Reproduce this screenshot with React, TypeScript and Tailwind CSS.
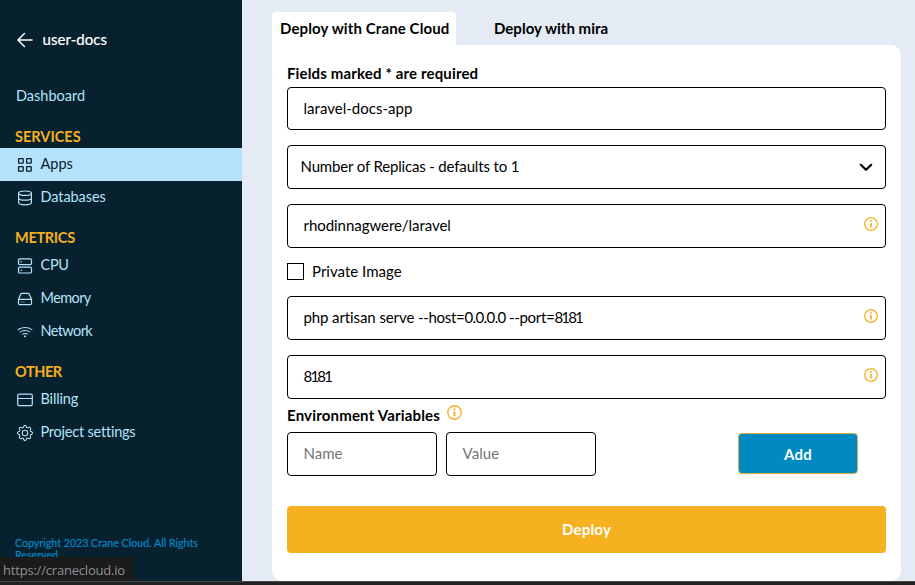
import type { ReactNode } from 'react';
import { BsGear, BsWifi } from 'react-icons/bs';

function Line({ children, size = 16 }: { children: ReactNode; size?: number }) {
  return (
    <svg width={size} height={size} viewBox="0 0 16 16" fill="none" stroke="currentColor" strokeLinecap="round" strokeLinejoin="round" className="shrink-0">
      {children}
    </svg>
  );
}

const AppsIcon = () => (
  <Line>
    <g strokeWidth="1.3">
      <rect x="1.6" y="1.6" width="4.6" height="4.6" rx="0.4" />
      <rect x="9.6" y="1.6" width="4.6" height="4.6" rx="0.4" />
      <rect x="1.6" y="9.6" width="4.6" height="4.6" rx="0.4" />
      <rect x="9.6" y="9.6" width="4.6" height="4.6" rx="0.4" />
    </g>
  </Line>
);

const DatabaseIcon = () => (
  <Line>
    <g strokeWidth="1.2">
      <ellipse cx="8" cy="3.2" rx="6.4" ry="2.2" />
      <path d="M1.6 3.2v9.4c0 1.2 2.9 2.2 6.4 2.2s6.4-1 6.4-2.2V3.2M1.6 7.9c0 1.2 2.9 2.2 6.4 2.2s6.4-1 6.4-2.2" />
    </g>
  </Line>
);

const CpuIcon = () => (
  <Line>
    <g strokeWidth="1.2">
      <rect x="1.5" y="0.8" width="13" height="5.8" rx="1.3" />
      <rect x="1.5" y="9.2" width="13" height="5.8" rx="1.3" />
      <path d="M4 3.8h.2M4 12.2h.2" strokeWidth="1.4" />
    </g>
  </Line>
);

const MemoryIcon = () => (
  <Line>
    <path strokeWidth="1.2" d="M1.5 8.3 3.7 3.3C4 2.7 4.5 2.4 5.1 2.4h5.8c.6 0 1.1.3 1.4.9l2.2 5v4.1c0 .7-.5 1.2-1.2 1.2H2.7c-.7 0-1.2-.5-1.2-1.2zM1.5 8.3h13" />
    <path d="M4.2 11h.1M6.8 11h.1" strokeWidth="1.2" />
  </Line>
);

const BillingIcon = () => (
  <Line>
    <g strokeWidth="1.2">
      <rect x="0.7" y="2.2" width="14.6" height="11.4" rx="1.3" />
      <path d="M.7 6.5h14.6" />
    </g>
  </Line>
);

const InfoIcon = ({ size = 14 }: { size?: number }) => (
  <span className="text-[#f6b120]">
    <Line size={size}>
      <circle cx="8" cy="8" r="7.2" strokeWidth="1.5" />
      <path d="M8 6.8v5.2M8 3.8v1.6" strokeWidth="2" strokeLinecap="butt" />
    </Line>
  </span>
);

function Item({ icon, children, active, text = '' }: { icon: ReactNode; children: ReactNode; active?: boolean; text?: string }) {
  return (
    <a className={`flex h-[33px] shrink-0 items-center gap-[7.5px] pl-[17px] ${active ? 'bg-[#b5e3fb] text-[#07212e]' : 'text-[#b5e3fb]'}`}>
      {icon}
      <span className={`pb-[2px] ${text}`}>{children}</span>
    </a>
  );
}

function Heading({ children, text = '' }: { children: ReactNode; text?: string }) {
  return <h2 className={`mt-3 h-[23px] shrink-0 pl-[15px] font-bold leading-[24px] text-[#f6b120] ${text}`}>{children}</h2>;
}

function Field({ children, className = '', info }: { children: ReactNode; className?: string; info?: boolean }) {
  return (
    <div className={`flex items-center justify-between rounded-[4px] border border-black pb-[2px] pl-[15.5px] pr-[7px] ${className}`}>
      <span className="whitespace-pre">{children}</span>
      {info && <span className="pb-[2px]"><InfoIcon /></span>}
    </div>
  );
}

export default function App() {
  return (
    <div className="relative flex h-[585px] w-[915px] flex-col overflow-hidden bg-[#e4ebf4] font-['Lato','Open_Sans',sans-serif] text-[15px] leading-[18px] text-black">
      <div className="flex h-[581px] shrink-0">
        <nav className="flex w-[242px] shrink-0 flex-col bg-[#07212e] text-[14.5px]">
          <header className="flex h-[76px] shrink-0 items-center gap-[10px] pl-[16.5px] text-[15px] text-white">
            <span className="pt-[3px]">
              <Line>
                <path d="M15 8H1.2M7.4 1.5 1 8l6.4 6.5" strokeWidth="1.5" />
              </Line>
            </span>
            <span className="pt-px tracking-[0.05px] [-webkit-text-stroke:0.2px_white]">user-docs</span>
          </header>
          <a className="h-[37px] shrink-0 pl-4 leading-[39px] text-[#b5e3fb]">Dashboard</a>
          <Heading text="tracking-[0.02px]">SERVICES</Heading>
          <Item active icon={<AppsIcon />}>Apps</Item>
          <Item icon={<DatabaseIcon />} text="tracking-[-0.08px]">Databases</Item>
          <Heading text="tracking-[-0.3px]">METRICS</Heading>
          <Item icon={<CpuIcon />} text="tracking-[-0.3px]">CPU</Item>
          <Item icon={<MemoryIcon />} text="tracking-[-0.6px]">Memory</Item>
          <Item icon={<BsWifi size={16} />} text="tracking-[-0.6px]">Network</Item>
          <Heading text="tracking-[-0.45px]">OTHER</Heading>
          <Item icon={<BillingIcon />} text="tracking-[-0.15px]">Billing</Item>
          <Item icon={<BsGear size={16} />} text="tracking-[-0.22px]">Project settings</Item>
          <footer className="mt-auto w-[215px] pb-5 pl-[15px] text-[10.65px] leading-[12px] text-[#0784c5] [-webkit-text-stroke:0.2px_#0784c5]">
            Copyright 2023 Crane Cloud. All Rights Reserved
          </footer>
        </nav>

        <main className="flex w-[659px] flex-col pl-[30px] pt-3">
          <div className="flex h-[33px] shrink-0 font-bold">
            <div className="w-[184px] rounded-t-[4px] bg-white pl-2 pt-[7px] tracking-[0.12px]">Deploy with Crane Cloud</div>
            <div className="pl-[38px] pt-[7px] tracking-[0.02px]">Deploy with mira</div>
          </div>
          <section className="flex flex-1 flex-col rounded-[10px] rounded-tl-none bg-white px-[15px] pt-[17px]">
            <div className="mb-1 h-[21px] font-bold leading-[22px] tracking-[0.15px]">Fields marked * are required</div>
            <Field className="h-[43px] tracking-[0.02px]">laravel-docs-app</Field>
            <div className="mt-[15px] flex h-11 items-center justify-between rounded-[4px] border border-black pl-[12.5px] pr-3">
              <span className="pb-[2px] tracking-[-0.16px]">
                Number of Replicas - defaults to 1
              </span>
              <svg width="14" height="10" viewBox="0 0 14 10" fill="none" stroke="black" strokeWidth="2.2" strokeLinecap="round" strokeLinejoin="round">
                <path d="m1.8 2.8 5.2 5 5.2-5" />
              </svg>
            </div>
            <Field info className="mt-[15px] h-11 tracking-[-0.05px]">rhodinnagwere/laravel</Field>
            <label className="flex h-12 items-center gap-2">
              <span className="mb-px size-[17px] border border-black" />
              <span className="pb-[2px] tracking-[0.02px]">Private Image</span>
            </label>
            <Field info className="h-11">
              <span className="tracking-[-0.1px]">php artisan serve </span>
              <span className="tracking-[-0.3px]">--host=</span>
              <span className="tracking-[-0.6px]">0.0.0.0 </span>
              <span className="tracking-[-0.3px]">--port=</span>
              <span className="tracking-[-1.8px]">8181</span>
            </Field>
            <Field info className="mt-[15px] h-11 tracking-[-1.8px]">8181</Field>
            <div className="flex h-[33px] items-center gap-[7px] pb-[2px] font-bold tracking-[0.18px]">
              Environment Variables
              <span className="pb-[4px]"><InfoIcon size={15} /></span>
            </div>
            <div className="flex h-11">
              <Field className="w-[150px] text-[#757575]">Name</Field>
              <Field className="ml-[9px] w-[150px] tracking-[0.1px] text-[#757575]">Value</Field>
              <button className="ml-auto mr-7 mt-px h-[41px] w-[120px] rounded-[4px] border border-[#d9ac3c] bg-[#008ac1] font-bold tracking-[0.3px] text-white">Add</button>
            </div>
            <button className="mt-[30px] h-[47px] rounded-[4px] bg-[#f6b120] pb-[2px] font-bold tracking-[0.2px] text-white">Deploy</button>
          </section>
        </main>
      </div>
      <div className="h-1 border-t border-[#494949] bg-[#222222]" />
      <div className="absolute left-0 top-[557px] h-6 w-[134px] rounded-tr-[4px] bg-[#1b1b1b] pl-[3px] pt-[5px] font-['Open_Sans'] text-[13px] leading-[17px] tracking-[-0.2px] text-[#8f9194]">https://cranecloud.io</div>
    </div>
  );
}
